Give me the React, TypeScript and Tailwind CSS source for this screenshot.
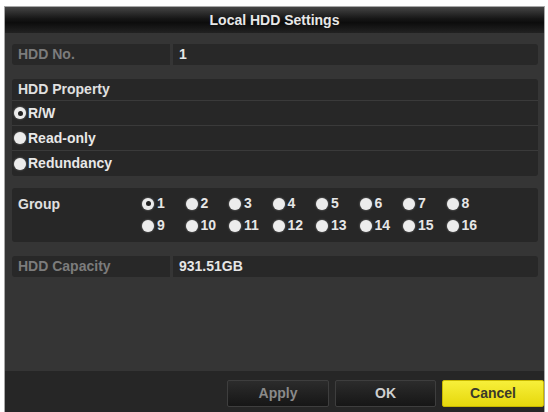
import React, { useState } from 'react';

const Radio = ({ checked }: { checked: boolean }) => (
  <span className="flex h-[12px] w-[12px] shrink-0 items-center justify-center rounded-full bg-[#ececec] shadow-[0_0_2px_rgba(255,255,255,0.5)]">
    {checked && <span className="h-[5px] w-[5px] rounded-full bg-[#222]" />}
  </span>
);

const InfoRow = ({ label, value }: { label: string; value: string }) => (
  <div className="flex h-[21px] gap-[3px]">
    <div className="flex w-[158px] items-center rounded-l-[3px] bg-[#282828] pl-[6px] text-[#7c7c7c]">{label}</div>
    <div className="flex flex-1 items-center rounded-r-[3px] bg-[#282828] pl-[6px] text-[#e6e6e6]">{value}</div>
  </div>
);

export default function App() {
  const [property, setProperty] = useState('R/W');
  const [group, setGroup] = useState(1);
  const options = ['R/W', 'Read-only', 'Redundancy'];
  const groups = Array.from({ length: 16 }, (_, i) => i + 1);

  return (
    <div className="h-[412px] w-[548px] overflow-hidden bg-white pl-[4px] pt-[6px] font-['Liberation_Sans',Arial,sans-serif] text-[14px] font-bold">
      <div className="flex h-[406px] w-[541px] flex-col border-l border-t border-r border-[#a8a8a8] bg-[#353535]">
        <div className="flex h-[26px] shrink-0 items-center justify-center bg-[linear-gradient(#444,#161616_45%,#0c0c0c_60%,#222)] text-[#e8e8e8]">
          Local HDD Settings
        </div>

        <div className="flex flex-1 flex-col pl-[7px] pr-[6px] pt-[11px]">
          <InfoRow label="HDD No." value="1" />

          <div className="mt-[14px] flex flex-col rounded-[3px] bg-[#272727]">
            <div className="flex h-[22px] items-center border-b border-[#3a3a3a] pl-[6px] text-[#e0e0e0]">HDD Property</div>
            {options.map((o, i) => (
              <div
                key={o}
                onClick={() => setProperty(o)}
                className={`flex h-[25px] items-center gap-[2px] pl-[2px] text-[#e8e8e8] ${i < 2 ? 'border-b border-[#3a3a3a]' : ''}`}
              >
                <Radio checked={property === o} />
                {o}
              </div>
            ))}
          </div>

          <div className="mt-[12px] flex h-[54px] rounded-[3px] bg-[#272727]">
            <div className="w-[130px] pl-[6px] pt-[6px] text-[#e0e0e0]">Group</div>
            <div className="grid grid-cols-[repeat(8,43.5px)] content-start gap-y-[5px] pt-[7px]">
              {groups.map((g) => (
                <div key={g} onClick={() => setGroup(g)} className="flex h-[17px] items-center gap-[3px] text-[#e6e6e6]">
                  <Radio checked={group === g} />
                  {g}
                </div>
              ))}
            </div>
          </div>

          <div className="mt-[14px]">
            <InfoRow label="HDD Capacity" value="931.51GB" />
          </div>
        </div>

        <div className="flex h-[41px] shrink-0 items-start justify-end gap-[6px] bg-[#262626] pt-[9px]">
          <button className="h-[27px] w-[102px] rounded-[2px] border border-[#3e3e3e] bg-[linear-gradient(#2c2c2c,#161616)] text-[#8a8a8a]">Apply</button>
          <button className="h-[27px] w-[101px] rounded-[2px] border border-[#3e3e3e] bg-[linear-gradient(#2c2c2c,#161616)] text-[#cfcfcf]">OK</button>
          <button className="h-[27px] w-[102px] rounded-[2px] border border-[#c8b800] bg-[linear-gradient(#f7ef3a,#e6d80c)] text-[#3a3a2a]">Cancel</button>
        </div>
      </div>
    </div>
  );
}
